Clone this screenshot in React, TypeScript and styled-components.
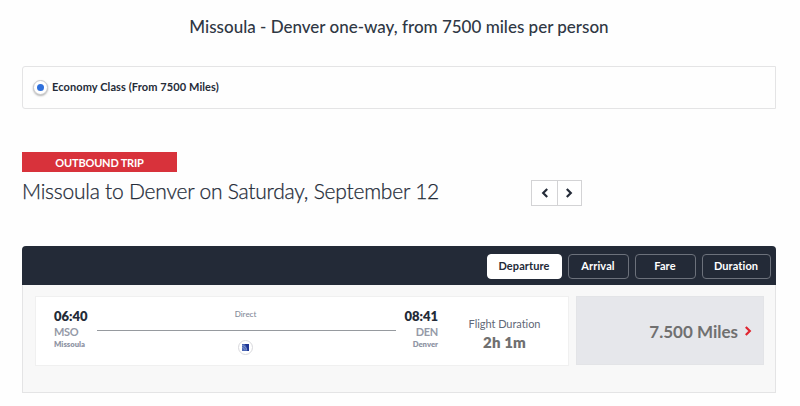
import React from "react";
import styled, { createGlobalStyle } from "styled-components";

const Global = createGlobalStyle`
  * { box-sizing: border-box; }
  body { margin: 0; background: #fefefe; }
`;

const Page = styled.main`
  width: 800px;
  height: 406px;
  padding: 16px 24px 0 22px;
  overflow: hidden;
  font-family: Lato, "Open Sans", sans-serif;
  color: #242b38;
  white-space: nowrap;
`;

const Title = styled.h1`
  margin: 0;
  height: 50px;
  text-align: center;
  font-size: 17px;
  font-weight: 500;
  line-height: 22px;
  color: #2f3744;
`;

const CabinBox = styled.label`
  display: flex;
  align-items: center;
  gap: 4px;
  height: 43px;
  padding: 0 10px;
  border: 1px solid #e4e4e5;
  border-radius: 3px 0 0 3px;
  font-size: 11px;
  font-weight: 700;
`;

const Radio = styled.span`
  display: grid;
  place-items: center;
  width: 15px;
  height: 15px;
  border-radius: 50%;
  border: 1px solid #c9c9cc;
  background: #fff;
  box-shadow: 0 1px 2px rgba(0, 0, 0, 0.3);
  &::after {
    content: "";
    width: 7px;
    height: 7px;
    border-radius: 50%;
    background: #2f70dc;
  }
`;

const CabinName = styled.span`
  letter-spacing: 0.1px;
  line-height: 14px;
  padding-bottom: 2px;
`;

const TripTag = styled.div`
  margin-top: 43px;
  width: 155px;
  height: 20px;
  background: #d8323b;
  color: #fff;
  text-align: center;
  font-size: 11px;
  font-weight: 700;
  line-height: 21px;
  letter-spacing: -0.2px;
`;

const TripRow = styled.div`
  display: flex;
  align-items: flex-start;
  height: 74px;
  padding-top: 8px;
`;

const TripHeading = styled.h2`
  margin: 0;
  width: 509px;
  font-size: 21px;
  font-weight: 300;
  line-height: 22px;
  letter-spacing: -0.23px;
  -webkit-text-stroke: 0.25px #242b38;
  color: #242b38;
`;

const DayPager = styled.div`
  display: flex;
  border: 1px solid #d3d3d5;
`;

const DayButton = styled.button`
  display: grid;
  place-items: center;
  width: 25px;
  height: 24px;
  padding: 0;
  border: 0;
  background: #fff;
  & + & {
    width: 24px;
    padding-right: 1px;
    border-left: 1px solid #d3d3d5;
  }
`;

const Results = styled.section`
  height: 147px;
  border: 1px solid #e4e4e5;
  border-top: 0;
  border-radius: 4px 4px 0 0;
  background: #f8f8f8;
`;

const SortBar = styled.div`
  display: flex;
  justify-content: flex-end;
  gap: 6px;
  height: 39px;
  margin: 0 -1px;
  padding: 8px 5.500px 0 0;
  border-radius: 4px 4px 0 0;
  background: #232a37;
`;

const SortButton = styled.button<{ $width: number; $active?: boolean }>`
  width: ${(p) => p.$width}px;
  height: 25px;
  padding: 0 0 1px;
  border: 1px solid ${(p) => (p.$active ? "#fff" : "#6c717b")};
  border-radius: 4px;
  background: ${(p) => (p.$active ? "#fff" : "transparent")};
  color: ${(p) => (p.$active ? "#232a37" : "#fff")};
  font: 700 11px/20px Lato, "Open Sans", sans-serif;
  letter-spacing: 0.1px;
`;

const FlightRow = styled.div`
  display: flex;
  gap: 7px;
  padding: 11px 11px 0 12px;
`;

const FlightCard = styled.article`
  display: flex;
  width: 534px;
  height: 70px;
  padding: 0 0 0 18px;
  border: 1px solid #f0f0f0;
  background: #fff;
`;

const Endpoint = styled.div<{ $right?: boolean }>`
  width: ${(p) => (p.$right ? 42 : 43)}px;
  padding-top: 11px;
  display: flex;
  flex-direction: column;
  align-items: ${(p) => (p.$right ? "flex-end" : "flex-start")};
`;

const Time = styled.div`
  font-size: 13px;
  font-weight: 800;
  line-height: 16px;
`;

const Code = styled.div`
  font-size: 11px;
  font-weight: 700;
  line-height: 15px;
  letter-spacing: -0.3px;
  color: #959aa8;
`;

const City = styled.div`
  font-size: 7.700px;
  font-weight: 800;
  line-height: 10px;
  color: #8f95a4;
`;

const Route = styled.div`
  display: flex;
  flex-direction: column;
  align-items: center;
  width: 299px;
  padding-top: 11px;
`;

const Stops = styled.div`
  height: 22px;
  padding-right: 2px;
  font-size: 8px;
  font-weight: 500;
  line-height: 13px;
  color: #858b99;
`;

const RouteLine = styled.div`
  width: 100%;
  height: 1px;
  background: #969a9f;
`;

const Carrier = styled.div`
  display: grid;
  place-items: center;
  width: 15px;
  height: 15px;
  margin: 9px 2px 0 0;
  border: 1px solid #d9d9dd;
  border-radius: 50%;
  background: #fff;
`;

const Duration = styled.div`
  flex: 1;
  padding: 19px 0 0 3px;
  text-align: center;
`;

const DurationLabel = styled.div`
  font-size: 11px;
  line-height: 16px;
  letter-spacing: -0.05px;
  color: #5f6878;
`;

const DurationValue = styled.div`
  font-size: 15px;
  font-weight: 800;
  line-height: 21px;
  letter-spacing: 0.15px;
  color: #707070;
`;

const FareCard = styled.div`
  display: flex;
  align-items: center;
  justify-content: flex-end;
  gap: 6px;
  flex: 1;
  height: 69px;
  padding-right: 11px;
  border: 1px solid #e3e4e7;
  background: #e6e7eb;
`;

const Miles = styled.span`
  padding-top: 2px;
  font-size: 17px;
  font-weight: 700;
  line-height: 22px;
  color: #707070;
`;

const Chevron = ({ left, color = "#242b38" }: { left?: boolean; color?: string }) => (
  <svg width="8" height="10" viewBox="0 0 8 10" fill="none" stroke={color} strokeWidth="2.2">
    <path d={left ? "M6.200 1 2.200 5 6.200 9" : "M1.800 1 5.800 5 1.800 9"} />
  </svg>
);

const CarrierMark = () => (
  <svg width="7" height="7" viewBox="0 0 8 8">
    <rect width="8" height="8" fill="#4c68b5" />
    <path d="M3 0h5v8H6C6 4.800 5 2.500 3 0z" fill="#1d3493" />
    <path d="M0 1.500C3 2 5 4 5.500 7M0 4c2 .3 3 1.500 3.500 3" fill="none" stroke="#a3b5df" strokeWidth=".6" />
  </svg>
);

const sorts = [
  { label: "Departure", width: 75, active: true },
  { label: "Arrival", width: 61 },
  { label: "Fare", width: 61 },
  { label: "Duration", width: 69 },
];

export default function App() {
  return (
    <Page>
      <Global />
      <Title>Missoula - Denver one-way, from 7500 miles per person</Title>
      <CabinBox>
        <Radio />
        <CabinName>Economy Class (From 7500 Miles)</CabinName>
      </CabinBox>
      <TripTag>OUTBOUND TRIP</TripTag>
      <TripRow>
        <TripHeading>Missoula to Denver on Saturday, September 12</TripHeading>
        <DayPager>
          <DayButton aria-label="Previous day"><Chevron left /></DayButton>
          <DayButton aria-label="Next day"><Chevron /></DayButton>
        </DayPager>
      </TripRow>
      <Results>
        <SortBar>
          {sorts.map((s) => (
            <SortButton key={s.label} $width={s.width} $active={s.active}>{s.label}</SortButton>
          ))}
        </SortBar>
        <FlightRow>
          <FlightCard>
            <Endpoint>
              <Time>06:40</Time>
              <Code>MSO</Code>
              <City>Missoula</City>
            </Endpoint>
            <Route>
              <Stops>Direct</Stops>
              <RouteLine />
              <Carrier><CarrierMark /></Carrier>
            </Route>
            <Endpoint $right>
              <Time>08:41</Time>
              <Code>DEN</Code>
              <City>Denver</City>
            </Endpoint>
            <Duration>
              <DurationLabel>Flight Duration</DurationLabel>
              <DurationValue>2h 1m</DurationValue>
            </Duration>
          </FlightCard>
          <FareCard>
            <Miles>7.500 Miles</Miles>
            <Chevron color="#e0252f" />
          </FareCard>
        </FlightRow>
      </Results>
    </Page>
  );
}
